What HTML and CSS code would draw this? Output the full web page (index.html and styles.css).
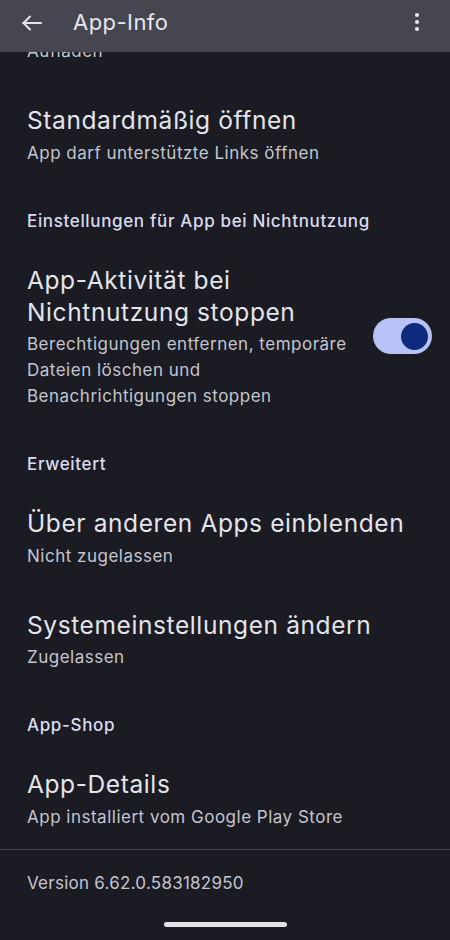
FILE: index.html
```html
<!DOCTYPE html>
<html lang="de">
<head>
<meta charset="utf-8">
<title>App-Info</title>
<link rel="stylesheet" href="styles.css">
</head>
<body>
<div class="screen">
  <header class="topbar">
    <svg class="back" width="24" height="20" viewBox="0 0 24 20" aria-hidden="true">
      <path d="M3 10H21M10 3.5L3.5 10L10 16.5" fill="none" stroke="#e4e4ec" stroke-width="2" stroke-linecap="round" stroke-linejoin="round"/>
    </svg>
    <h1 class="title">App-Info</h1>
    <svg class="more" width="8" height="22" viewBox="0 0 8 22" aria-hidden="true">
      <circle cx="4" cy="4" r="2.1" fill="#e4e4ec"/>
      <circle cx="4" cy="11" r="2.1" fill="#e4e4ec"/>
      <circle cx="4" cy="18" r="2.1" fill="#e4e4ec"/>
    </svg>
  </header>
  <main class="list">
    <div class="item clipped">
      <div class="text">
        <div class="sub">Aufladen</div>
      </div>
    </div>
    <div class="item">
      <div class="text">
        <div class="name">Standardmäßig öffnen</div>
        <div class="sub">App darf unterstützte Links öffnen</div>
      </div>
    </div>
    <div class="section">Einstellungen für App bei Nichtnutzung</div>
    <div class="item">
      <div class="text">
        <div class="name">App-Aktivität bei<br>Nichtnutzung stoppen</div>
        <div class="sub">Berechtigungen entfernen, temporäre<br>Dateien löschen und<br>Benachrichtigungen stoppen</div>
      </div>
      <div class="switch"><div class="thumb"></div></div>
    </div>
    <div class="section">Erweitert</div>
    <div class="item">
      <div class="text">
        <div class="name">Über anderen Apps einblenden</div>
        <div class="sub">Nicht zugelassen</div>
      </div>
    </div>
    <div class="item">
      <div class="text">
        <div class="name">Systemeinstellungen ändern</div>
        <div class="sub">Zugelassen</div>
      </div>
    </div>
    <div class="section">App-Shop</div>
    <div class="item last">
      <div class="text">
        <div class="name">App-Details</div>
        <div class="sub">App installiert vom Google Play Store</div>
      </div>
    </div>
    <div class="divider"></div>
    <div class="version">Version 6.62.0.583182950</div>
  </main>
  <div class="home"><div class="home-bar"></div></div>
</div>
</body>
</html>
```
FILE: styles.css
```css
* { box-sizing: border-box; }
html, body {
  margin: 0;
  padding: 0;
  background: #1a1b23;
}
body {
  font-family: Inter, Roboto, "Noto Sans", "Liberation Sans", sans-serif;
  color: #e3e3ea;
}
.screen {
  width: 450px;
  height: 940px;
  display: flex;
  flex-direction: column;
  overflow: hidden;
  background: #1a1b23;
}
.topbar {
  flex: 0 0 52px;
  height: 52px;
  background: #45464f;
  display: flex;
  align-items: center;
  padding: 0 29px 8px 20px;
  position: relative;
  z-index: 2;
}
.back { flex: 0 0 auto; margin-top: 2px; }
.title {
  margin: 0 0 0 29px;
  flex: 1 1 auto;
  font-size: 22px;
  font-weight: 400;
  color: #e6e6ee;
  letter-spacing: 0.45px;
}
.more { flex: 0 0 auto; margin-top: 0px; }

.list {
  flex: 1 1 auto;
  display: flex;
  flex-direction: column;
  overflow: hidden;
}
.item {
  display: flex;
  align-items: center;
  padding: 20px 18px 20px 27px;
}
.item.clipped { margin-top: -34px; }
.item.last { padding-bottom: 19px; }
.text { flex: 1 1 auto; }
.name {
  font-size: 24.5px;
  line-height: 32px;
  color: #e4e4ec;
  letter-spacing: 0.6px;
}
.sub {
  margin-top: 3.5px;
  font-size: 17px;
  line-height: 26px;
  color: #c4c5cf;
  letter-spacing: 0.5px;
}
.clipped .sub { margin-top: 0; }
.section {
  padding: 23px 27px 11px;
  font-size: 17px;
  line-height: 24px;
  font-weight: 500;
  color: #dadcf2;
  letter-spacing: 0.65px;
}
.switch {
  flex: 0 0 59px;
  width: 59px;
  height: 36px;
  border-radius: 18px;
  background: #b7c2f7;
  display: flex;
  align-items: center;
  justify-content: flex-end;
  padding-right: 4.5px;
  margin-left: 12px;
}
.thumb {
  width: 27px;
  height: 27px;
  border-radius: 50%;
  background: #0e2a7c;
}
.divider {
  height: 1px;
  background: #46474f;
}
.version {
  padding: 21px 27px 0;
  font-size: 17px;
  line-height: 24px;
  color: #c4c5cf;
  letter-spacing: 0.25px;
}
.home {
  flex: 0 0 20px;
  display: flex;
  justify-content: center;
  padding-top: 2px;
}
.home-bar {
  width: 123px;
  height: 4.5px;
  border-radius: 3px;
  background: #e2e2e6;
}
```
